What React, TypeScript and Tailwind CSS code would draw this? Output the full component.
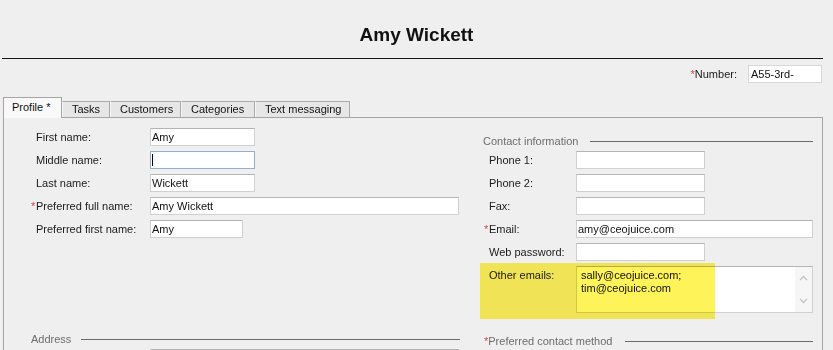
const Asterisk = ({ show }: { show?: boolean }) => (
  <span className="inline-block w-[5px] text-[#e5403b]">{show ? '*' : ''}</span>
);

type RowProps = {
  label: string;
  required?: boolean;
  value?: string;
  labelClass: string;
  inputClass: string;
  focused?: boolean;
};

function Row({ label, required, value, labelClass, inputClass, focused }: RowProps) {
  return (
    <div className="flex h-[18px] items-center">
      <div className={`flex shrink-0 items-center text-[#1b1b1b] ${labelClass}`}>
        <Asterisk show={required} />
        <span>{label}</span>
      </div>
      <div
        className={`flex h-[18px] items-center border bg-white pl-[1px] leading-[16px] text-[#111] ${
          focused ? 'border-[#8fb0cf]' : 'border-[#d0d0d0] border-t-[#b4b4b4]'
        } ${inputClass}`}
      >
        {focused ? <span className="h-[12px] w-px bg-black" /> : value}
      </div>
    </div>
  );
}

function GroupHeader({
  label,
  required,
  className,
  lineClass,
}: {
  label: string;
  required?: boolean;
  className: string;
  lineClass: string;
}) {
  return (
    <div className={`flex h-[14px] items-center ${className}`}>
      {required && <span className="text-[#e5403b]">*</span>}
      <span className="text-[#6d6d6d]">{label}</span>
      <div className={`h-px flex-1 bg-[#6b6b6b] ${lineClass}`} />
    </div>
  );
}

const Chevron = ({ up }: { up?: boolean }) => (
  <svg width="9" height="6" viewBox="0 0 9 6" fill="none">
    <path
      d={up ? 'M1 5 L4.5 1.5 L8 5' : 'M1 1 L4.5 4.5 L8 1'}
      stroke="#c4c4c4"
      strokeWidth="1.3"
    />
  </svg>
);

const tabs = ['Tasks', 'Customers', 'Categories', 'Text messaging'];
const tabWidths = ['w-[48px]', 'w-[71px]', 'w-[74px]', 'w-[95px]'];

export default function App() {
  return (
    <div className="h-[350px] w-[833px] overflow-hidden bg-[#f0eff0] font-['Liberation_Sans',Arial,sans-serif] text-[11px]">
      <div className="flex h-[58px] items-center justify-center pt-[12px]">
        <h1 className="text-[19px] leading-[22px] font-bold text-[#111]">Amy Wickett</h1>
      </div>
      <div className="ml-[2px] h-px w-[821px] bg-[#151515]" />

      <div className="mt-[6px] flex h-[18px] items-center justify-end pr-[11px]">
        <span className="mr-[11px] text-[#1b1b1b]">
          <span className="text-[#e5403b]">*</span>Number:
        </span>
        <div className="flex h-[18px] w-[74px] items-center border border-[#d8d8d8] bg-white pl-[2px] text-[#111]">
          A55-3rd-
        </div>
      </div>

      <div className="mt-[14px] ml-[3px] flex h-[20px] items-end">
        <div className="relative z-10 -mb-px flex h-[21px] w-[59px] items-center border-x border-t border-[#a4a4a4] bg-[#f9f9f9] pb-[1px] pl-[8px] text-[#111]">
          Profile *
        </div>
        {tabs.map((t, i) => (
          <div
            key={t}
            className={`flex h-[16px] items-center border-t border-r border-l border-[#aaaaaa] border-l-[#f6f6f6] bg-[#e6e6e6] pl-[9px] text-[#111] ${tabWidths[i]}`}
          >
            {t}
          </div>
        ))}
      </div>

      <div className="ml-[3px] h-[300px] w-[820px] border-x border-t border-[#a4a4a4] pt-[10px]">
        <div className="flex">
          <div className="flex w-[474px] flex-col">
            <div className="flex flex-col gap-[5px]">
              <Row label="First name:" value="Amy" labelClass="w-[146px] pl-[27px]" inputClass="w-[105px]" />
              <Row label="Middle name:" focused labelClass="w-[146px] pl-[27px]" inputClass="w-[105px]" />
              <Row label="Last name:" value="Wickett" labelClass="w-[146px] pl-[27px]" inputClass="w-[105px]" />
              <Row
                label="Preferred full name:"
                required
                value="Amy Wickett"
                labelClass="w-[146px] pl-[27px]"
                inputClass="w-[309px]"
              />
              <Row label="Preferred first name:" value="Amy" labelClass="w-[146px] pl-[27px]" inputClass="w-[93px]" />
            </div>
            <GroupHeader label="Address" className="mt-[94px] pr-[18px] pl-[27px]" lineClass="ml-[10px]" />
            <div className="mt-[3px] ml-[146px] h-[18px] w-[309px] border border-[#d0d0d0] border-t-[#b4b4b4] bg-white" />
          </div>

          <div className="flex flex-1 flex-col pt-[6px] pr-[9px]">
            <GroupHeader label="Contact information" className="pl-[5px]" lineClass="ml-[12px]" />
            <div className="mt-[3px] flex flex-col gap-[5px]">
              <Row label="Phone 1:" labelClass="w-[98px] pl-[6px]" inputClass="w-[129px]" />
              <Row label="Phone 2:" labelClass="w-[98px] pl-[6px]" inputClass="w-[129px]" />
              <Row label="Fax:" labelClass="w-[98px] pl-[6px]" inputClass="w-[129px]" />
              <Row
                label="Email:"
                required
                value="amy@ceojuice.com"
                labelClass="w-[98px] pl-[6px]"
                inputClass="w-[237px]"
              />
              <Row label="Web password:" labelClass="w-[98px] pl-[6px]" inputClass="w-[129px]" />

              <div className="relative flex h-[47px] items-start">
                <div className="w-[98px] shrink-0 pt-[3px] pl-[11px] leading-[13px] text-[#1b1b1b]">Other emails:</div>
                <div className="flex h-[47px] w-[237px] border border-[#d0d0d0] border-t-[#b4b4b4] bg-white">
                  <div className="flex-1 pt-[2px] pl-[4px] leading-[13px] text-[#111]">
                    sally@ceojuice.com;
                    <br />
                    tim@ceojuice.com
                  </div>
                  <div className="flex w-[17px] flex-col items-center justify-between bg-[#f6f6f6] py-[8px]">
                    <Chevron up />
                    <Chevron />
                  </div>
                </div>
                <div className="pointer-events-none absolute top-[-3px] left-[2px] h-[56px] w-[235px] bg-[#fff35a] mix-blend-multiply blur-[0.6px]" />
              </div>
            </div>
            <GroupHeader
              label="Preferred contact method"
              required
              className="mt-[21px] pl-[6px]"
              lineClass="ml-[13px]"
            />
          </div>
        </div>
      </div>
    </div>
  );
}
